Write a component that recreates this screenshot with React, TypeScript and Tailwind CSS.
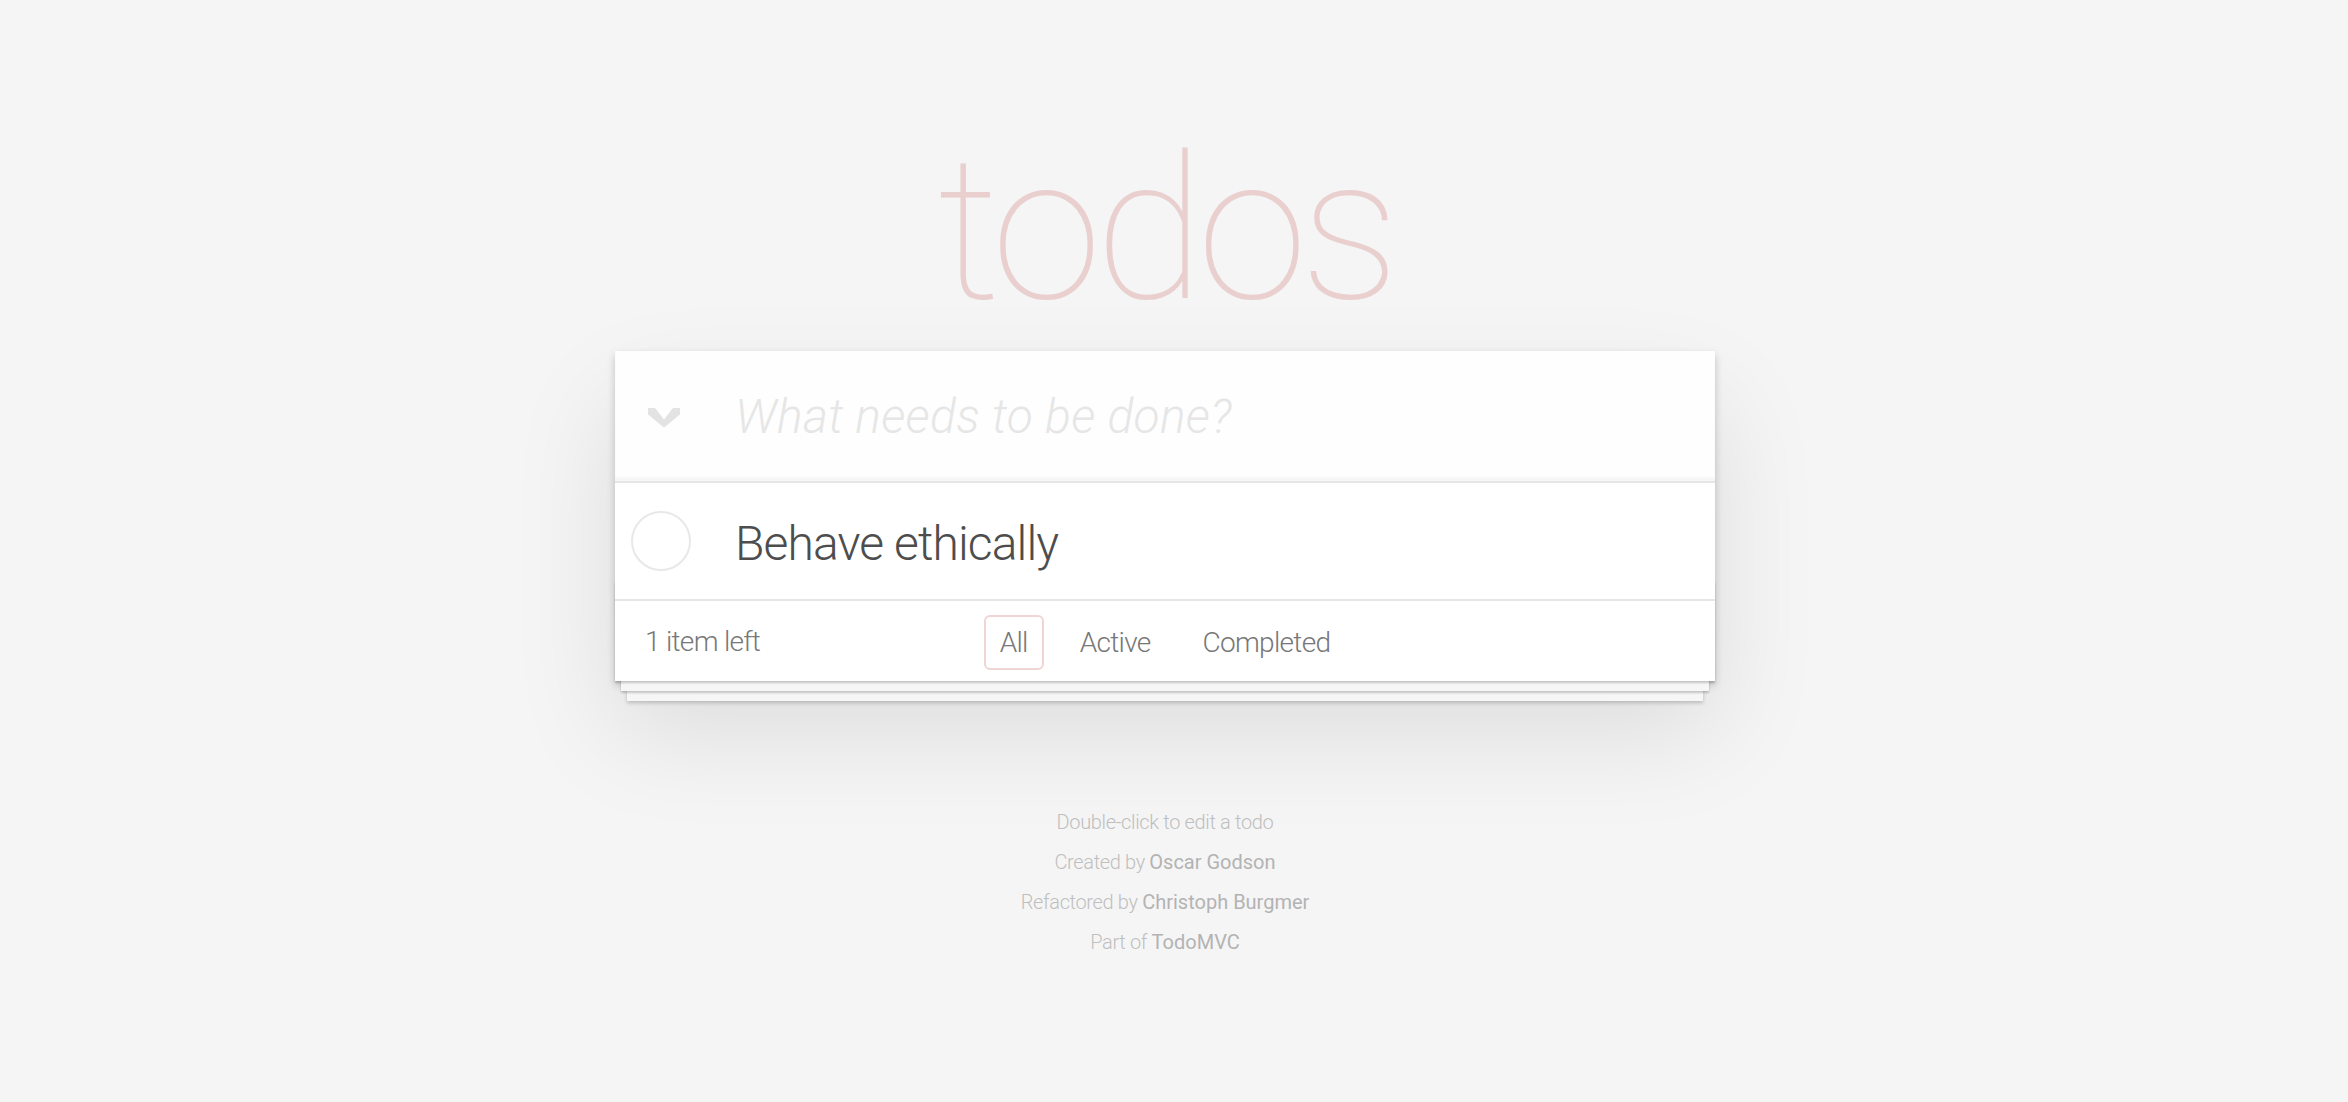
import { useState } from 'react';

interface Todo {
  id: number;
  title: string;
  completed: boolean;
}

const filters = ['All', 'Active', 'Completed'];

function ToggleAllIcon() {
  return (
    <svg width="32" height="20" viewBox="0 0 32 20" className="fill-[#e3e3e3]">
      <polygon points="0,0 7,0 16,11.5 25,0 32,0 32,6.5 16,19.5 0,6.5" />
    </svg>
  );
}

export default function App() {
  const [todos] = useState<Todo[]>([{ id: 1, title: 'Behave ethically', completed: false }]);
  const [filter, setFilter] = useState('All');
  const left = todos.filter((t) => !t.completed).length;

  return (
    <div className="min-h-screen bg-[#f5f5f5] font-['Roboto','Helvetica_Neue',Helvetica,Arial,sans-serif] font-light text-[#4d4d4d]">
      <div className="pr-[18px]">
        <div className="mx-auto w-[1100px] pt-[130px]">
          <h1 className="h-[200px] text-center text-[200px] leading-[200px] font-thin tracking-[-7px] text-[#eacfcf]">
            todos
          </h1>

          <section className="relative mt-[21px] bg-white shadow-[0_4px_8px_0_rgba(0,0,0,0.2),0_50px_100px_0_rgba(0,0,0,0.1)]">
            <header className="flex h-[130px] items-center bg-[rgba(0,0,0,0.003)] shadow-[inset_0_-4px_2px_rgba(0,0,0,0.03)]">
              <button className="ml-[33px] mt-[4px] flex h-[20px] w-[32px] items-center justify-center">
                <ToggleAllIcon />
              </button>
              <input
                className="ml-[55px] mt-[2px] flex-1 bg-transparent text-[48px] font-light italic tracking-[0.3px] text-[#4d4d4d] outline-none placeholder:text-[#e6e6e6]"
                placeholder="What needs to be done?"
              />
            </header>

            <ul className="border-t-2 border-[#e6e6e6]">
              {todos.map((todo) => (
                <li key={todo.id} className="flex h-[116px] items-center">
                  <span className="ml-[16px] h-[60px] w-[60px] shrink-0 rounded-full border-2 border-[#e8e8e8]" />
                  <label className="ml-[44px] mt-[5px] text-[48px] leading-[60px] tracking-[-0.9px] text-[#4d4d4d]">
                    {todo.title}
                  </label>
                </li>
              ))}
            </ul>

            <footer className="relative grid h-[82px] grid-cols-[1fr_auto_1fr] items-center border-t-2 border-[#e6e6e6] px-[30px] text-[28px] tracking-[-0.7px] text-[#777]">
              <div className="pointer-events-none absolute inset-x-0 bottom-0 h-[100px] shadow-[0_2px_2px_rgba(0,0,0,0.2),0_16px_0_-6px_#f6f6f6,0_18px_2px_-6px_rgba(0,0,0,0.2),0_32px_0_-12px_#f6f6f6,0_34px_4px_-12px_rgba(0,0,0,0.2)]" />
              <span className="mt-[2px] leading-[40px]">
                {left} item{left === 1 ? '' : 's'} left
              </span>
              <ul className="mt-[3px] flex items-center gap-[20px]">
                {filters.map((f) => (
                  <li key={f}>
                    <button
                      onClick={() => setFilter(f)}
                      className={
                        f === filter
                          ? 'flex h-[55px] items-center rounded-[6px] border-2 border-[#efd5d5] px-[14px]'
                          : 'flex h-[55px] items-center rounded-[6px] border-2 border-transparent px-[14px]'
                      }
                    >
                      {f}
                    </button>
                  </li>
                ))}
              </ul>
              <span />
            </footer>
          </section>

          <footer className="mt-[131px] flex flex-col items-center gap-[20px] text-[20px] leading-[20px] tracking-[-0.35px] text-[#bfbfbf]">
            <p>Double-click to edit a todo</p>
            <p>
              Created by <a className="font-normal tracking-normal text-[#b3b3b3]">Oscar Godson</a>
            </p>
            <p>
              Refactored by <a className="font-normal tracking-normal text-[#b3b3b3]">Christoph Burgmer</a>
            </p>
            <p>
              Part of <a className="font-normal tracking-normal text-[#b3b3b3]">TodoMVC</a>
            </p>
          </footer>
        </div>
      </div>
    </div>
  );
}
